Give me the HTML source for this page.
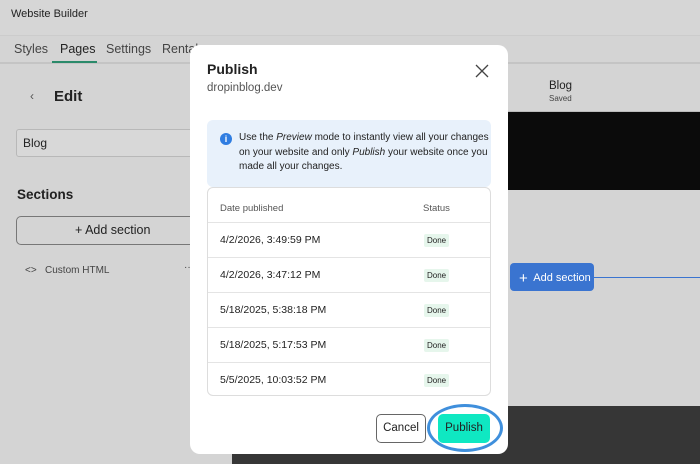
<!DOCTYPE html>
<html><head><style>
*{box-sizing:border-box;margin:0;padding:0}
body{width:700px;height:464px;overflow:hidden;background:#d4d4d4;font-family:"Liberation Sans",sans-serif;position:relative;color:#222}
.a{position:absolute}
</style></head><body>
<div class="a" style="left:0;top:0;width:700px;height:36px;background:#d6d6d6;border-bottom:1px solid #ccc"></div>
<div class="a" style="left:11px;top:8px;font-size:11px;color:#222">Website Builder</div>
<div class="a" style="left:0;top:36px;width:700px;height:28px;background:#d4d4d4;border-bottom:2px solid #c4c4c4"></div>
<div class="a" style="left:14px;top:42px;font-size:12.5px;color:#444">Styles</div>
<div class="a" style="left:60px;top:42px;font-size:12.5px;color:#222">Pages</div>
<div class="a" style="left:52px;top:61px;width:45px;height:2px;background:#2a8a6a"></div>
<div class="a" style="left:106px;top:42px;font-size:12.5px;color:#444">Settings</div>
<div class="a" style="left:162px;top:42px;font-size:12.5px;color:#444">Rentals</div>
<div class="a" style="left:30px;top:89px;font-size:12px;color:#555">‹</div>
<div class="a" style="left:54px;top:88px;font-size:15px;font-weight:bold">Edit</div>
<div class="a" style="left:16px;top:129px;width:180px;height:28px;border:1px solid #b8b8b8;border-radius:3px;background:#d8d8d8;font-size:12px;padding:6px 6px">Blog</div>
<div class="a" style="left:17px;top:187px;font-size:13.5px;font-weight:bold">Sections</div>
<div class="a" style="left:16px;top:216px;width:180px;height:29px;border:1px solid #777;border-radius:5px;font-size:12.5px;padding:6px 0 0 58px">+ Add section</div>
<div class="a" style="left:25px;top:265px;font-size:10px;color:#444">&lt;&gt;&nbsp;&nbsp; Custom HTML</div>
<div class="a" style="left:184px;top:262px;font-size:10px;color:#444">··</div>
<div class="a" style="left:508px;top:64px;width:192px;height:48px;background:#d4d4d4;border-bottom:1px solid #bbb"></div>
<div class="a" style="left:549px;top:80px;font-size:11.5px">Blog</div>
<div class="a" style="left:549px;top:94px;font-size:8px;color:#444">Saved</div>
<div class="a" style="left:508px;top:112px;width:192px;height:78px;background:#0b0b0b"></div>
<div class="a" style="left:594px;top:277px;width:106px;height:1px;background:#3a74d0"></div>
<div class="a" style="left:510px;top:263px;width:84px;height:28px;background:#3a74d0;border-radius:4px;color:#fff;font-size:11px;padding:7px 0 0 9px"><span style="font-size:15px;vertical-align:-2px">+</span>&nbsp; Add section</div>
<div class="a" style="left:232px;top:406px;width:468px;height:58px;background:#363636"></div>
<div class="a" style="left:190px;top:45px;width:318px;height:409px;background:#fff;border-radius:10px"></div>
<div class="a" style="left:207px;top:61px;font-size:14px;font-weight:bold">Publish</div>
<div class="a" style="left:207px;top:82px;font-size:11.5px;color:#555">dropinblog.dev</div>
<svg class="a" style="left:475px;top:64px" width="14" height="14"><path d="M1 1L13 13M13 1L1 13" stroke="#444" stroke-width="1.3"/></svg>
<div class="a" style="left:207px;top:120px;width:284px;height:67px;background:#e8f1fb;border-radius:6px"></div>
<div class="a" style="left:220px;top:133px;width:12px;height:12px;border-radius:50%;background:#2f7de1;color:#fff;font-size:9px;font-weight:bold;text-align:center;line-height:12px">i</div>
<div class="a" style="left:239px;top:131px;width:250px;font-size:10px;line-height:14.5px;color:#222">Use the <i>Preview</i> mode to instantly view all your changes on your website and only <i>Publish</i> your website once you made all your changes.</div>
<div class="a" style="left:207px;top:187px;width:284px;height:209px;border:1px solid #ddd;border-radius:6px;overflow:hidden">
<div style="height:35px;border-bottom:1px solid #e4e4e4;font-size:9.5px;color:#555;position:relative"><span class="a" style="left:12px;top:15px">Date published</span><span class="a" style="left:215px;top:15px">Status</span></div>
<div style="font-size:10.5px;color:#222">
<div style="height:35px;border-bottom:1px solid #e4e4e4;position:relative"><span class="a" style="left:12px;top:11px">4/2/2026, 3:49:59 PM</span><span class="a" style="left:216px;top:11px;background:#e6f6ec;font-size:8px;padding:2px 3px;border-radius:2px">Done</span></div>
<div style="height:35px;border-bottom:1px solid #e4e4e4;position:relative"><span class="a" style="left:12px;top:11px">4/2/2026, 3:47:12 PM</span><span class="a" style="left:216px;top:11px;background:#e6f6ec;font-size:8px;padding:2px 3px;border-radius:2px">Done</span></div>
<div style="height:35px;border-bottom:1px solid #e4e4e4;position:relative"><span class="a" style="left:12px;top:11px">5/18/2025, 5:38:18 PM</span><span class="a" style="left:216px;top:11px;background:#e6f6ec;font-size:8px;padding:2px 3px;border-radius:2px">Done</span></div>
<div style="height:35px;border-bottom:1px solid #e4e4e4;position:relative"><span class="a" style="left:12px;top:11px">5/18/2025, 5:17:53 PM</span><span class="a" style="left:216px;top:11px;background:#e6f6ec;font-size:8px;padding:2px 3px;border-radius:2px">Done</span></div>
<div style="height:35px;position:relative"><span class="a" style="left:12px;top:11px">5/5/2025, 10:03:52 PM</span><span class="a" style="left:216px;top:11px;background:#e6f6ec;font-size:8px;padding:2px 3px;border-radius:2px">Done</span></div>
</div></div>
<div class="a" style="left:376px;top:414px;width:50px;height:29px;border:1px solid #666;border-radius:5px;font-size:11.5px;text-align:center;line-height:27px">Cancel</div>
<div class="a" style="left:438px;top:414px;width:52px;height:29px;background:#0fe8c2;border-radius:5px;font-size:11.5px;text-align:center;line-height:29px">Publish</div>
<div class="a" style="left:427px;top:404px;width:76px;height:48px;border:3px solid #3f8fdc;border-radius:50%"></div>
</body></html>
